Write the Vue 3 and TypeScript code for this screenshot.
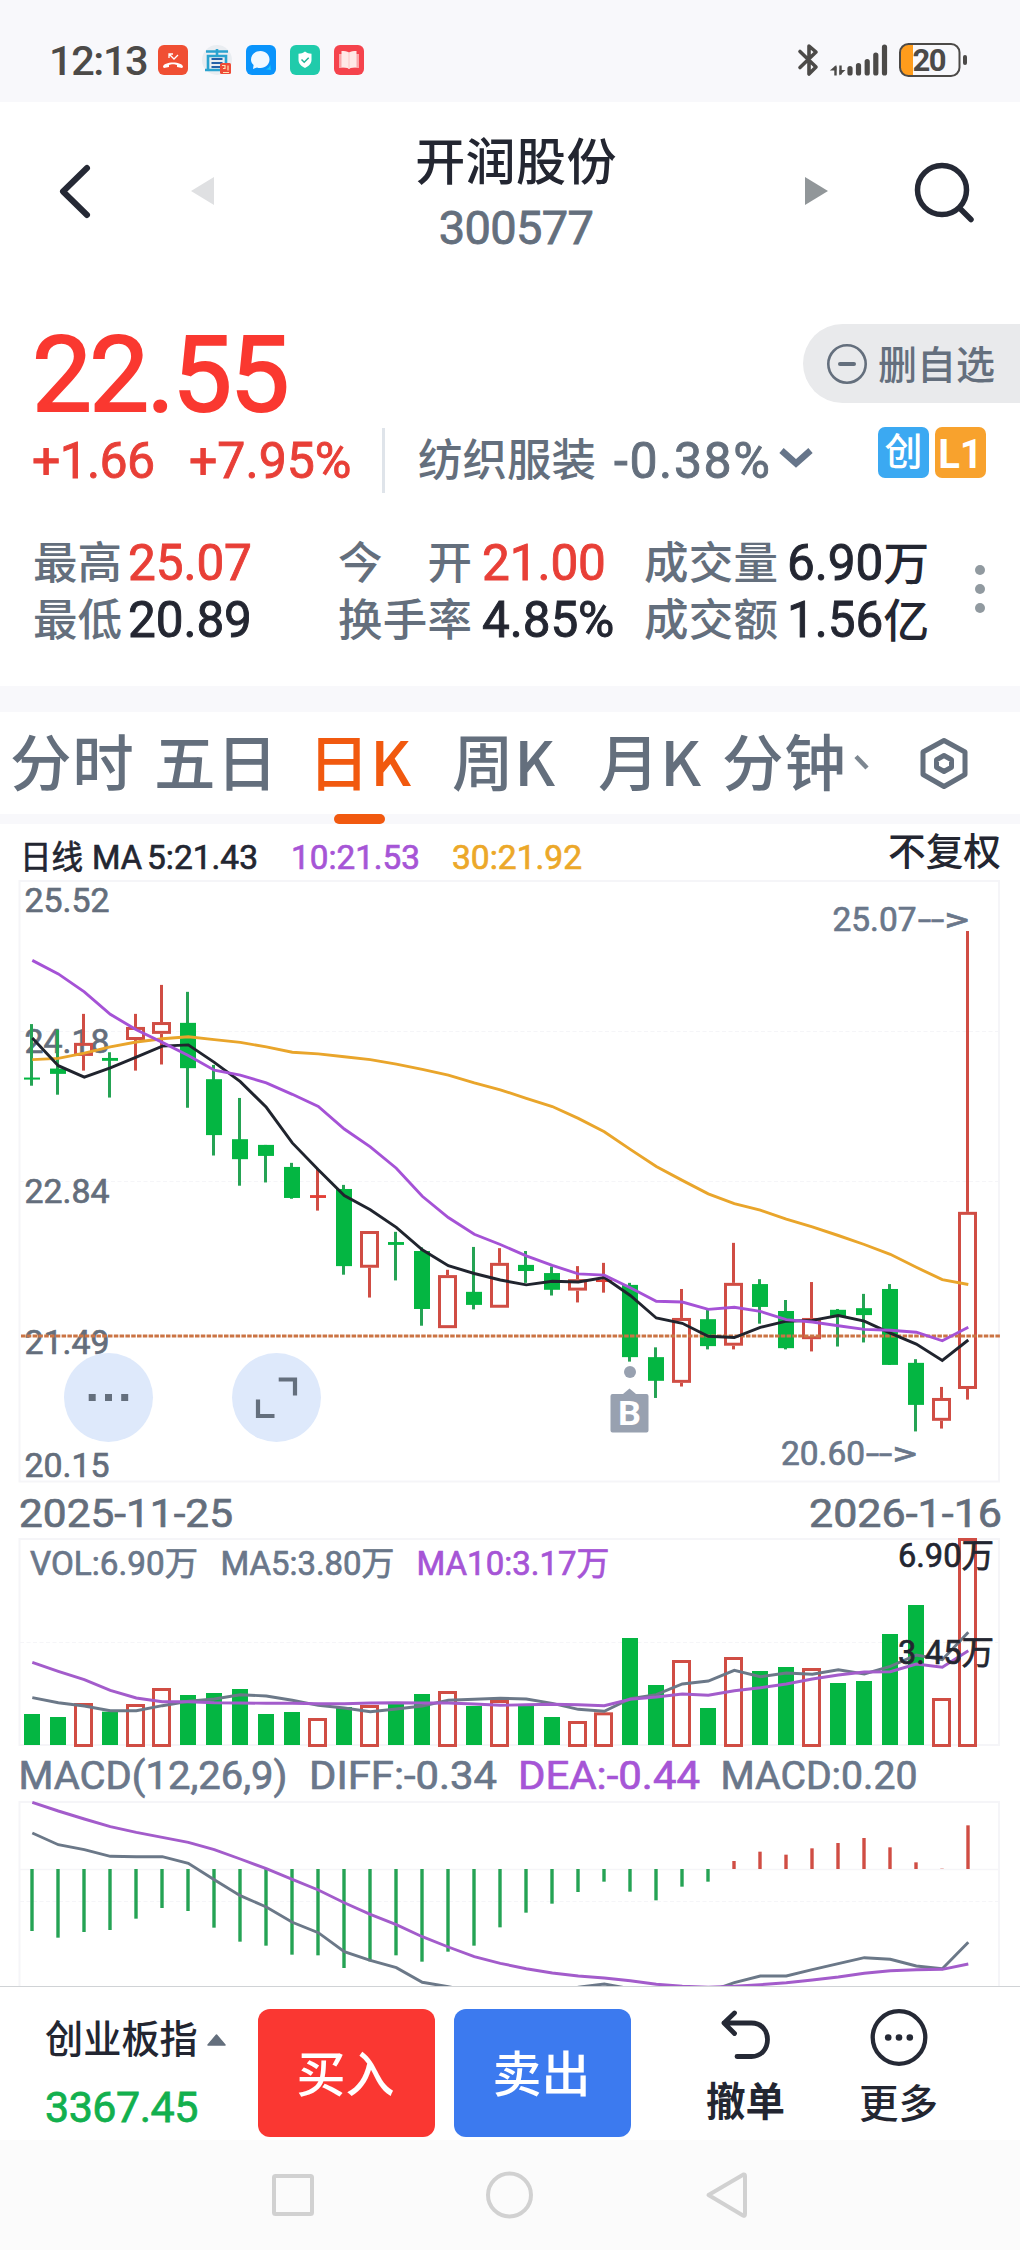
<script setup lang="ts">
type Candle = [kind: 'g' | 'r', high: number, top: number, bottom: number, low: number]

interface Label {
  x: number
  y: number
  w: number
  text: string
  cls: string
}

const STEP = 26
const FIRST = 32

const priceY = (v: number): number => 880 + v * 0.40816
const lowerY = (v: number): number => 1480 + v / 3
const cx = (i: number): number => FIRST + i * STEP

const candles: Candle[] = [
  ['g', 353, 484, 489, 504], ['g', 367, 462, 475, 526], ['r', 328, 399, 431, 467],
  ['g', 422, 436, 443, 533], ['r', 328, 360, 392, 467], ['r', 257, 348, 377, 452],
  ['g', 274, 350, 461, 558], ['g', 453, 488, 625, 675], ['g', 534, 635, 684, 749],
  ['g', 649, 649, 676, 741], ['g', 693, 703, 779, 781], ['r', 708, 772, 779, 810],
  ['g', 747, 757, 946, 967], ['r', 860, 860, 950, 1023], ['g', 862, 887, 894, 981],
  ['g', 900, 909, 1051, 1092], ['r', 955, 968, 1098, 1098], ['g', 899, 1009, 1041, 1052],
  ['r', 902, 938, 1048, 1048], ['g', 909, 943, 958, 987], ['g', 947, 963, 1004, 1018],
  ['r', 946, 978, 1006, 1035], ['r', 938, 979, 985, 1011], ['g', 987, 992, 1169, 1180],
  ['g', 1145, 1169, 1227, 1269], ['r', 1002, 1073, 1232, 1241], ['g', 1050, 1076, 1142, 1150],
  ['r', 889, 987, 1141, 1150], ['g', 978, 990, 1046, 1087], ['g', 1029, 1056, 1147, 1150],
  ['r', 985, 1073, 1125, 1155], ['g', 1051, 1053, 1070, 1143], ['g', 1014, 1049, 1066, 1133],
  ['g', 990, 1002, 1188, 1188], ['g', 1174, 1183, 1286, 1351], ['r', 1242, 1269, 1325, 1344],
  ['r', 125, 813, 1247, 1273],
]

const ma5 = [387, 455, 483, 460, 434, 407, 404, 447, 494, 557, 644, 710, 773, 808, 851, 906, 945, 964, 980, 992, 983, 985, 974, 1018, 1073, 1086, 1118, 1121, 1096, 1081, 1079, 1067, 1081, 1110, 1137, 1177, 1127]
const ma10 = [197, 230, 274, 329, 367, 398, 430, 466, 478, 497, 525, 555, 610, 654, 706, 775, 827, 868, 893, 921, 944, 965, 968, 999, 1032, 1034, 1052, 1047, 1057, 1077, 1083, 1092, 1101, 1103, 1108, 1129, 1096]
const ma30 = [440, 437, 424, 409, 397, 389, 384, 391, 398, 409, 422, 426, 433, 440, 451, 464, 478, 497, 514, 535, 555, 584, 617, 660, 702, 736, 769, 793, 809, 831, 850, 871, 893, 917, 949, 979, 991]

const volume = [702, 711, 669, 695, 672, 624, 645, 639, 627, 702, 696, 714, 681, 675, 669, 642, 633, 678, 660, 676, 711, 723, 697, 474, 615, 540, 684, 531, 573, 561, 564, 609, 603, 462, 375, 654, 174]
const vol5 = [653, 668, 678, 692, 692, 677, 664, 657, 644, 648, 661, 676, 684, 695, 687, 678, 661, 658, 655, 657, 670, 688, 694, 656, 644, 612, 603, 571, 590, 579, 583, 569, 582, 559, 525, 539, 457]
const vol10 = [547, 574, 599, 631, 654, 665, 665, 668, 669, 670, 670, 671, 671, 669, 668, 669, 669, 672, 676, 674, 673, 674, 677, 658, 651, 642, 646, 632, 623, 612, 597, 585, 576, 575, 552, 562, 512]

const macd = [1353, 1373, 1356, 1350, 1316, 1284, 1293, 1343, 1385, 1397, 1424, 1426, 1464, 1444, 1426, 1445, 1415, 1397, 1342, 1298, 1271, 1236, 1205, 1235, 1261, 1220, 1205, 1143, 1115, 1124, 1105, 1089, 1074, 1102, 1147, 1166, 1036]
const diff = [1059, 1094, 1109, 1129, 1130, 1130, 1150, 1199, 1247, 1281, 1327, 1358, 1415, 1441, 1463, 1507, 1520, 1535, 1540, 1540, 1535, 1522, 1512, 1526, 1545, 1545, 1535, 1508, 1488, 1488, 1469, 1451, 1433, 1438, 1458, 1466, 1387]
const dea = [967, 993, 1017, 1040, 1057, 1072, 1087, 1109, 1137, 1166, 1198, 1230, 1268, 1303, 1334, 1370, 1401, 1430, 1450, 1466, 1479, 1488, 1494, 1502, 1513, 1519, 1522, 1519, 1514, 1508, 1500, 1491, 1480, 1472, 1469, 1468, 1452]

const line = (values: number[], scale: (v: number) => number): string =>
  values.map((v, i) => `${cx(i) + 0.3},${scale(v).toFixed(1)}`).join(' ')

const hollow = (c: Candle): boolean => c[0] === 'r' && c[3] - c[2] > 10

const backLabels: Label[] = [
  { x: 20, y: 869, w: 63, text: '日线', cls: 't33 ink' },
  { x: 92, y: 869, w: 50, text: 'MA', cls: 't33 ink' },
  { x: 147, y: 869, w: 111, text: '5:21.43', cls: 't33 ink' },
  { x: 291, y: 869, w: 129, text: '10:21.53', cls: 't33 purple' },
  { x: 452, y: 869, w: 130, text: '30:21.92', cls: 't33 gold' },
  { x: 888, y: 865, w: 113, text: '不复权', cls: 't38 ink' },
  { x: 24.5, y: 911.5, w: 85, text: '25.52', cls: 't33 gray' },
  { x: 24.5, y: 1053, w: 85, text: '24.18', cls: 't33 gray' },
  { x: 24.5, y: 1203, w: 85, text: '22.84', cls: 't33 gray' },
  { x: 24.5, y: 1353.5, w: 85, text: '21.49', cls: 't33 gray' },
  { x: 24.5, y: 1477, w: 85, text: '20.15', cls: 't33 gray' },
]

const frontLabels: Label[] = [
  { x: 19, y: 1527, w: 214, text: '2025-11-25', cls: 't40 gray' },
  { x: 809, y: 1527, w: 193, text: '2026-1-16', cls: 't40 gray' },
  { x: 30, y: 1575, w: 168, text: 'VOL:6.90万', cls: 't33 slate' },
  { x: 220.5, y: 1575, w: 174, text: 'MA5:3.80万', cls: 't33 slate' },
  { x: 416.5, y: 1575, w: 193, text: 'MA10:3.17万', cls: 't33 purple' },
  { x: 898, y: 1567, w: 96, text: '6.90万', cls: 't33 ink' },
  { x: 898, y: 1663.5, w: 96, text: '3.45万', cls: 't33 ink' },
  { x: 18.5, y: 1789, w: 269, text: 'MACD(12,26,9)', cls: 't40 slate' },
  { x: 309, y: 1789, w: 188, text: 'DIFF:-0.34', cls: 't40 slate' },
  { x: 518, y: 1789, w: 182, text: 'DEA:-0.44', cls: 't40 purple' },
  { x: 720.5, y: 1789, w: 197, text: 'MACD:0.20', cls: 't40 slate' },
]

const stats = [
  [
    { label: '最高', value: '25.07', up: true },
    { label: '最低', value: '20.89', up: false },
  ],
  [
    { label: '今 开', value: '21.00', up: true },
    { label: '换手率', value: '4.85%', up: false },
  ],
  [
    { label: '成交量', value: '6.90', unit: '万', up: false },
    { label: '成交额', value: '1.56', unit: '亿', up: false },
  ],
]

const tabs = [
  { name: '分时', gap: 10 },
  { name: '五日', gap: 24 },
  { name: '日K', gap: 34, active: true },
  { name: '周K', gap: 24 },
  { name: '月K', gap: 26 },
  { name: '分钟', gap: 4 },
]
</script>

<template>
  <div class="screen">
    <div class="status">
      <span class="clock">12:13</span>
      <div class="apps">
        <svg width="30" height="30" viewBox="0 0 30 30">
          <rect width="30" height="30" rx="6" fill="#f04f33" />
          <path d="M5 22c0-6 20-6 20 0l-1 1-5-1v-2c-2-1-6-1-8 0v2l-5 1z" fill="#fff" />
          <path d="M11 13V9h4M11 9l5 5 4-4" fill="none" stroke="#fff" stroke-width="1.300" />
        </svg>
        <svg width="30" height="30" viewBox="0 0 30 30">
          <circle cx="15" cy="15" r="15" fill="#e9edf1" />
          <g fill="none" stroke="#2aa3cf" stroke-width="2.600">
            <path d="M4 6.500h22M15 4v6M6 24V11h18v13M3 25h18" />
          </g>
          <path d="M9.500 14h11M9.500 18h11M9.500 22h9" stroke="#2461a8" stroke-width="2.200" />
          <rect x="18" y="18" width="11" height="11" rx="1.500" fill="#ee4b37" />
          <path d="M20 20.500h3v3h-2m5-3v5m-5 2h6" fill="none" stroke="#ffe0b0" stroke-width="1.200" />
        </svg>
        <svg width="30" height="30" viewBox="0 0 30 30">
          <rect width="30" height="30" rx="6" fill="#0a94fb" />
          <path d="M18 24c4 1 7-3 6-6l1 7z" fill="#16c8fa" />
          <path d="M14.500 6c5.200 0 9 3.800 9 8.500S19.700 23 14.500 23c-1.500 0-2.700-.2-3.500-.6L7 24l.6-4C5.800 18.500 5 16.700 5 14.500 5 9.800 9.300 6 14.500 6z" fill="#f0f9ff" />
        </svg>
        <svg width="30" height="30" viewBox="0 0 30 30">
          <rect width="30" height="30" rx="6" fill="#20cbab" />
          <path d="M15 6.500c2 1.500 4 2.200 6.500 2.300v6c0 4-3 6.700-6.500 8.200-3.500-1.500-6.500-4.200-6.500-8.200v-6c2.500-.1 4.500-.8 6.500-2.300z" fill="#fff" />
          <path d="M11.500 14.500l2.700 2.700 4.500-4.500" fill="none" stroke="#20b397" stroke-width="1.500" />
        </svg>
        <svg width="30" height="30" viewBox="0 0 30 30">
          <rect width="30" height="30" rx="6" fill="#f5434c" />
          <path d="M5 9h20v14H5z" fill="#fba7aa" />
          <path d="M7.500 6c3 0 5.500.3 7.500 1.500C17 6.300 19.500 6 22.500 6v16c-3 0-5.500.5-7.500 2-2-1.500-4.500-2-7.500-2z" fill="#ffe9e7" />
          <path d="M15 7.500V24" stroke="#fbc8c7" stroke-width="1" />
        </svg>
      </div>
      <svg class="sys" width="172" height="36" viewBox="797 41 172 36">
        <g fill="none" stroke="#4c4a48" stroke-width="3.600" stroke-linejoin="round" stroke-linecap="round">
          <path d="M800 50.500l16 15.500-7 7V45l7 6-16 15.500" />
        </g>
        <g fill="none" stroke="#4c4a48" stroke-width="2.400">
          <path d="M835.500 74.500V65.500M840.500 64.500V73.500" />
        </g>
        <path d="M829.800 69.500l6.500-5.500v5.500zM839.500 74.500V69h6z" fill="#4c4a48" />
        <g stroke="#4c4a48" stroke-width="5.200" stroke-linecap="round">
          <path d="M850 67.500v4.500M858.500 64.500V72M867.200 60.500V72M875.800 54v18M884.500 46v26" />
        </g>
        <path d="M913 43.500h-5c-4 0-7 3-7 7v17c0 4 3 7 7 7h5z" fill="#ff9c1c" />
        <rect x="900" y="43" width="59.500" height="32" rx="8.500" fill="none" stroke="#4c4a48" stroke-width="2" />
        <rect x="963" y="54" width="4" height="10" rx="2" fill="#4c4a48" />
        <text x="912.500" y="70" textLength="34" class="batt">20</text>
      </svg>
    </div>

    <header class="nav">
      <svg class="nav-side" width="220" height="70" viewBox="0 156 220 70">
        <path d="M87 168L63 191.500 87 215" fill="none" stroke="#252935" stroke-width="6" stroke-linecap="round" stroke-linejoin="round" />
        <path d="M191 191l23-14v28z" fill="#dfe0e2" />
      </svg>
      <div class="title">
        <div class="name">开润股份</div>
        <div class="code">300577</div>
      </div>
      <svg class="nav-side" width="220" height="70" viewBox="800 156 220 70">
        <path d="M828 191l-23-14v28z" fill="#919699" />
        <circle cx="942" cy="190" r="24.500" fill="none" stroke="#252935" stroke-width="5.500" />
        <path d="M960 208.500l11 11" stroke="#252935" stroke-width="5.500" stroke-linecap="round" />
      </svg>
    </header>

    <section class="quote">
      <div class="price-row">
        <div class="price">22.55</div>
        <div class="remove">
          <svg width="42" height="42" viewBox="0 0 42 42" fill="none" stroke="#646f7d">
            <circle cx="21" cy="21" r="18.700" stroke-width="2.600" />
            <path d="M14 21h14" stroke-width="4" stroke-linecap="round" />
          </svg>
          <span>删自选</span>
        </div>
      </div>
      <div class="change-row">
        <span class="delta">+1.66</span>
        <span class="percent">+7.95%</span>
        <i class="rule"></i>
        <span class="sector">纺织服装</span>
        <span class="sector-pct">-0.38%</span>
        <svg class="chev" width="34" height="24" viewBox="0 0 34 24">
          <path d="M2.500 3.500L17 16.500 31.500 3.500" fill="none" stroke="#66758a" stroke-width="6.500" />
        </svg>
        <span class="badge blue">创</span>
        <span class="badge amber">L1</span>
      </div>
      <div class="stats">
        <div v-for="(col, c) in stats" :key="c" class="col" :class="'c' + c">
          <div v-for="s in col" :key="s.label" class="stat">
            <span class="label"><b v-for="(ch, k) in s.label.split('')" :key="k">{{ ch }}</b></span>
            <span class="value" :class="{ up: s.up }">{{ s.value }}<em v-if="'unit' in s">{{ s.unit }}</em></span>
          </div>
        </div>
        <div class="dots"><i></i><i></i><i></i></div>
      </div>
    </section>

    <nav class="tabs">
      <div
        v-for="t in tabs"
        :key="t.name"
        class="tab"
        :class="{ active: t.active }"
        :style="{ marginLeft: t.gap + 'px' }"
      ><span>{{ t.name }}</span></div>
      <svg class="tab-tools" width="130" height="60" viewBox="850 732 130 60">
        <path d="M855 755.500l11 11.500" stroke="#7d8791" stroke-width="4.500" fill="none" />
        <g fill="none" stroke="#646f7d" stroke-linejoin="round" stroke-width="5">
          <path d="M943 739.500l21 11.500v22.500L943 785.500l-21-12V751z" />
          <path d="M943 754.500l7.500 4.200v7.600L943 770.500l-7.500-4.200v-7.600z" />
        </g>
      </svg>
    </nav>

    <svg class="charts" width="1020" height="1162" viewBox="0 824 1020 1162">
      <g fill="none" stroke="#f5f5f8" stroke-width="2">
        <rect x="19.500" y="881" width="979.500" height="600.500" />
        <rect x="19.500" y="1539" width="979.500" height="206" />
        <rect x="19.500" y="1802" width="979.500" height="220" />
        <path d="M20 1869.500H999" stroke-width="1.500" />
        <path d="M20 1031.500H999M20 1181.500H999M20 1642.500H999M20 1901.500H999" stroke-width="1.200" stroke-dasharray="4 2.500" />
      </g>

      <text v-for="l in backLabels" :key="l.text" :x="l.x" :y="l.y" :textLength="l.w" lengthAdjust="spacingAndGlyphs" :class="l.cls">{{ l.text }}</text>

      <g v-for="(c, i) in candles" :key="'k' + i">
        <template v-if="c[0] === 'g'">
          <rect :x="cx(i) - 2" :y="priceY(c[1])" width="3" :height="priceY(c[4]) - priceY(c[1])" fill="#25a354" />
          <rect :x="cx(i) - 8" :y="priceY(c[2])" width="16" :height="priceY(c[3]) - priceY(c[2])" fill="#04b642" />
        </template>
        <template v-else-if="hollow(c)">
          <rect :x="cx(i) - 2" :y="priceY(c[1])" width="3" :height="priceY(c[2]) - priceY(c[1])" fill="#d04d44" />
          <rect :x="cx(i) - 2" :y="priceY(c[3])" width="3" :height="priceY(c[4]) - priceY(c[3])" fill="#d04d44" />
          <rect :x="cx(i) - 8.5" :y="priceY(c[2]) + 1.5" width="16" :height="priceY(c[3]) - priceY(c[2]) - 3" fill="none" stroke="#d04d44" stroke-width="3" />
        </template>
        <template v-else>
          <rect :x="cx(i) - 2" :y="priceY(c[1])" width="3" :height="priceY(c[4]) - priceY(c[1])" fill="#d04d44" />
          <rect :x="cx(i) - 8" :y="priceY(c[2])" width="16" :height="priceY(c[3]) - priceY(c[2])" fill="#e23f36" />
        </template>
      </g>
      <path d="M21 1336H1001" stroke="#cb7444" stroke-width="2.800" stroke-dasharray="4.500 1.300" />
      <g fill="none" stroke-width="2.900">
        <polyline :points="line(ma30, priceY)" stroke="#e9a52b" />
        <polyline :points="line(ma5, priceY)" stroke="#20242e" />
        <polyline :points="line(ma10, priceY)" stroke="#a552d6" />
      </g>

      <text x="832.500" y="930.500" textLength="84" class="t33 slate" lengthAdjust="spacingAndGlyphs">25.07</text>
      <text x="918" y="930.500" textLength="51" class="t33 slate" lengthAdjust="spacingAndGlyphs">--&gt;</text>
      <text x="781" y="1464.500" textLength="84" class="t33 slate" lengthAdjust="spacingAndGlyphs">20.60</text>
      <text x="866" y="1464.500" textLength="51" class="t33 slate" lengthAdjust="spacingAndGlyphs">--&gt;</text>

      <circle cx="630" cy="1372" r="6" fill="#98a1b0" />
      <path d="M612.500 1394H623l6.500-5.500 6.500 5.500h10.500q2 0 2 2v34.500q0 2-2 2h-34q-2 0-2-2V1396q0-2 2-2z" fill="#98a1b0" />
      <text x="618" y="1424.500" textLength="23" lengthAdjust="spacingAndGlyphs" class="mark">B</text>

      <circle cx="108.500" cy="1397.500" r="44.500" fill="#dee9fb" />
      <circle cx="276.500" cy="1397.500" r="44.500" fill="#dee9fb" />
      <path d="M88.700 1394h7v7h-7zM105 1394h7v7h-7zM121.200 1394h7v7h-7z" fill="#646f7d" />
      <path d="M278.700 1379.500H295V1395.500M258 1399.500V1416H274.500" fill="none" stroke="#646f7d" stroke-width="4.200" />

      <g v-for="(v, i) in volume" :key="'v' + i">
        <rect v-if="candles[i][0] === 'g'" :x="cx(i) - 8" :y="lowerY(v)" width="16" :height="1745 - lowerY(v)" fill="#04b642" />
        <rect v-else :x="cx(i) - 8.500" :y="lowerY(v) + 1.500" width="16" :height="1744 - lowerY(v)" fill="none" stroke="#d04d44" stroke-width="3" />
      </g>
      <g fill="none" stroke-width="2.900">
        <polyline :points="line(vol5, lowerY)" stroke="#6b7888" />
        <polyline :points="line(vol10, lowerY)" stroke="#a35ccb" />
      </g>

      <g v-for="(v, i) in macd" :key="'m' + i">
        <rect v-if="v > 1168" :x="cx(i) - 1.700" y="1869" width="3.400" :height="lowerY(v) - 1869" fill="#25a354" />
        <rect v-else :x="cx(i) - 1.700" :y="lowerY(v)" width="3.400" :height="1869 - lowerY(v)" fill="#d04d44" />
      </g>
      <g fill="none" stroke-width="2.900">
        <polyline :points="line(diff, lowerY)" stroke="#6b7888" />
        <polyline :points="line(dea, lowerY)" stroke="#a35ccb" />
      </g>

      <text v-for="l in frontLabels" :key="l.text" :x="l.x" :y="l.y" :textLength="l.w" lengthAdjust="spacingAndGlyphs" :class="l.cls">{{ l.text }}</text>
    </svg>

    <footer class="actions">
      <div class="index">
        <div class="index-name">
          创业板指
          <svg width="19" height="12" viewBox="0 0 19 12"><path d="M9.500 1L18 11H1z" fill="#646f7d" stroke="#646f7d" stroke-width="1.500" stroke-linejoin="round" /></svg>
        </div>
        <div class="index-value">3367.45</div>
      </div>
      <button class="buy">买入</button>
      <button class="sell">卖出</button>
      <div class="act undo">
        <svg width="60" height="60" viewBox="716 2007 60 60" fill="none" stroke="#252935" stroke-width="4.800" stroke-linecap="round" stroke-linejoin="round">
          <path d="M734.500 2013L724 2023l10.500 10.500M724 2023H751.500C762 2023 767.500 2031 767.500 2039.500S762 2056.500 751.500 2056.500H737" />
        </svg>
        <span>撤单</span>
      </div>
      <div class="act more">
        <svg width="60" height="60" viewBox="868.500 2007 60 60">
          <circle cx="898.500" cy="2037.500" r="26.300" fill="none" stroke="#252935" stroke-width="4.300" />
          <g fill="#252935"><circle cx="887.700" cy="2037.500" r="3.300" /><circle cx="898.500" cy="2037.500" r="3.300" /><circle cx="909.300" cy="2037.500" r="3.300" /></g>
        </svg>
        <span>更多</span>
      </div>
    </footer>

    <div class="keys">
      <svg width="1020" height="110" viewBox="0 2140 1020 110" fill="none" stroke="#d1d1d1" stroke-width="4" stroke-linejoin="round">
        <rect x="274" y="2176" width="38" height="38" rx="1.500" />
        <circle cx="509.500" cy="2195" r="21.500" />
        <path d="M708.500 2195L743.500 2174.500Q745 2174 745 2176V2214Q745 2216.500 743 2215.500z" />
      </svg>
    </div>
  </div>
</template>

<style>
body {
  margin: 0;
}
</style>

<style scoped>
.screen {
  width: 1020px;
  height: 2250px;
  overflow: hidden;
  background: #fff;
  color: #232631;
  font-family: Roboto, "Noto Sans CJK SC", sans-serif;
  font-weight: 450;
  white-space: nowrap;
}
svg {
  display: block;
  flex: none;
}

.status {
  height: 102px;
  box-sizing: border-box;
  padding: 18px 51px 0 49px;
  display: flex;
  align-items: center;
  background: #f8f8fb;
}
.clock {
  width: 109px;
  font-size: 41.5px;
  font-weight: 500;
  letter-spacing: -1.4px;
  color: #4c4a48;
}
.apps {
  display: flex;
  gap: 14px;
}
.sys {
  margin-left: auto;
}
.batt {
  font-size: 31px;
  font-weight: 700;
  fill: #4c4a48;
}

.nav {
  height: 198px;
  box-sizing: border-box;
  padding-top: 26px;
  display: flex;
  justify-content: space-between;
}
.nav-side {
  margin-top: 28px;
}
.title {
  text-align: center;
  padding-left: 12px;
}
.name {
  font-size: 50px;
  letter-spacing: 0.4px;
  line-height: 70px;
}
.code {
  font-size: 47px;
  letter-spacing: -0.7px;
  line-height: 60px;
  color: #646f7d;
}
.code,
.price,
.delta,
.percent,
.sector-pct,
.value,
.index-value {
  -webkit-text-stroke: 0.018em currentColor;
}

.quote {
  height: 386px;
}
.price-row {
  height: 127px;
  display: flex;
  justify-content: space-between;
}
.price {
  padding: 12px 0 0 32px;
  font-size: 106.500px;
  line-height: 125px;
  letter-spacing: -2.500px;
  color: #fa3830;
}
.remove {
  margin-top: 24px;
  width: 217px;
  height: 79px;
  box-sizing: border-box;
  padding-left: 23px;
  display: flex;
  align-items: center;
  gap: 10px;
  border-radius: 40px 0 0 40px;
  background: #e9eaec;
  color: #646f7d;
  font-size: 39px;
  font-weight: 500;
}
.remove span {
  margin-top: -3px;
}
.change-row {
  height: 66px;
  display: flex;
  align-items: center;
  padding-left: 32px;
  font-size: 50px;
  line-height: 66px;
  color: #646f7d;
}
.delta,
.percent,
.sector,
.sector-pct {
  padding-top: 2px;
}
.delta,
.percent {
  color: #e83f37;
}
.delta {
  width: 157px;
  letter-spacing: -0.7px;
}
.percent {
  width: 193px;
}
.rule {
  width: 3px;
  height: 65px;
  margin-right: 33px;
  background: #dfe4ea;
}
.sector {
  width: 196px;
  font-size: 44.500px;
}
.sector-pct {
  width: 165px;
  letter-spacing: 1.600px;
}
.chev {
  margin-top: -2px;
}
.badge {
  width: 51px;
  height: 51px;
  border-radius: 7px;
  color: #fff;
  font-size: 38px;
  line-height: 50px;
  text-align: center;
  margin-top: -15px;
}
.blue {
  margin-left: 65px;
  background: #3ba9f2;
}
.amber {
  margin-left: 6px;
  background: #f8a22d;
  font-weight: 700;
  font-size: 40px;
  line-height: 55px;
}
.stats {
  position: relative;
  display: flex;
  padding: 40px 0 0 33px;
}
.stat {
  height: 57px;
  display: flex;
  align-items: center;
}
.label {
  display: flex;
  justify-content: space-between;
  font-size: 44.500px;
  color: #646f7d;
  margin-top: -4px;
}
.label b {
  font-weight: inherit;
}
.value {
  font-size: 49.500px;
  line-height: 57px;
  letter-spacing: -0.1px;
  padding-top: 4px;
}
.value em {
  font-style: normal;
  font-size: 46px;
  -webkit-text-stroke: 0;
}
.up {
  color: #e83f37;
}
.c0 {
  width: 305px;
}
.c0 .label {
  width: 89px;
  margin-right: 6px;
}
.c1 {
  width: 306px;
}
.c1 .label {
  width: 134px;
  margin-right: 10px;
}
.c2 .label {
  width: 134px;
  margin-right: 9px;
}
.dots {
  position: absolute;
  left: 975px;
  top: 72px;
  display: grid;
  gap: 9px;
}
.dots i {
  width: 10px;
  height: 10px;
  border-radius: 50%;
  background: #919aa0;
}

.tabs {
  height: 138px;
  box-sizing: border-box;
  border-top: 26px solid #f8f8fb;
  border-bottom: 10px solid #f8f8fb;
  display: flex;
  align-items: center;
  font-family: "Noto Sans CJK SC", sans-serif;
  font-size: 61.500px;
  letter-spacing: 0.800px;
  color: #646f7d;
}
.tab {
  position: relative;
  width: 120px;
  height: 102px;
  line-height: 96px;
}
.active {
  color: #f1590f;
}
.active::after {
  content: "";
  position: absolute;
  left: 26px;
  bottom: -10px;
  width: 51px;
  height: 10px;
  border-radius: 5px;
  background: #f1590f;
}
.tab-tools {
  margin-left: 9px;
}

.charts text {
  white-space: pre;
}
.t33,
.t40 {
  font-weight: 400;
  stroke-width: 0.700px;
}
.t33 {
  font-size: 33.500px;
}
.t38 {
  font-size: 37.500px;
  stroke-width: 0;
}
.t40 {
  font-size: 39.500px;
}
.ink {
  fill: #232631;
  stroke: #232631;
}
.gray {
  fill: #646e7c;
  stroke: #646e7c;
}
.slate {
  fill: #6a778a;
  stroke: #6a778a;
}
.purple {
  fill: #a655d6;
  stroke: #a655d6;
}
.gold {
  fill: #eca829;
  stroke: #eca829;
}
.mark {
  font-size: 34px;
  font-weight: 700;
  fill: #fff;
}

.actions {
  height: 154px;
  box-sizing: border-box;
  border-top: 1px solid #d0d3d6;
  padding-left: 45px;
  display: flex;
}
.index {
  width: 213px;
  padding-top: 25px;
}
.index-name {
  display: flex;
  align-items: center;
  gap: 9px;
  font-size: 38.200px;
  line-height: 56px;
}
.index-value {
  margin-top: 11px;
  font-size: 43px;
  line-height: 56px;
  letter-spacing: -0.5px;
  color: #12b04e;
}
.actions button {
  width: 177px;
  height: 128px;
  margin: 22px 19px 0 0;
  padding: 0 2px 5px 0;
  border: 0;
  border-radius: 12px;
  color: #fff;
  font: 500 49px "Noto Sans CJK SC", sans-serif;
}
.buy {
  background: #fa3732;
}
.sell {
  background: #3c7aef;
}
.act {
  display: flex;
  flex-direction: column;
  align-items: center;
  padding-top: 20px;
  font-size: 39.500px;
  line-height: 50px;
}
.act span {
  padding-top: 11px;
}
.undo {
  margin-left: 56px;
  font-weight: 700;
}
.more {
  margin-left: 74px;
  font-weight: 500;
}
.more span {
  padding-top: 13px;
}
.keys {
  height: 110px;
  background: #fbfbfb;
}
</style>
